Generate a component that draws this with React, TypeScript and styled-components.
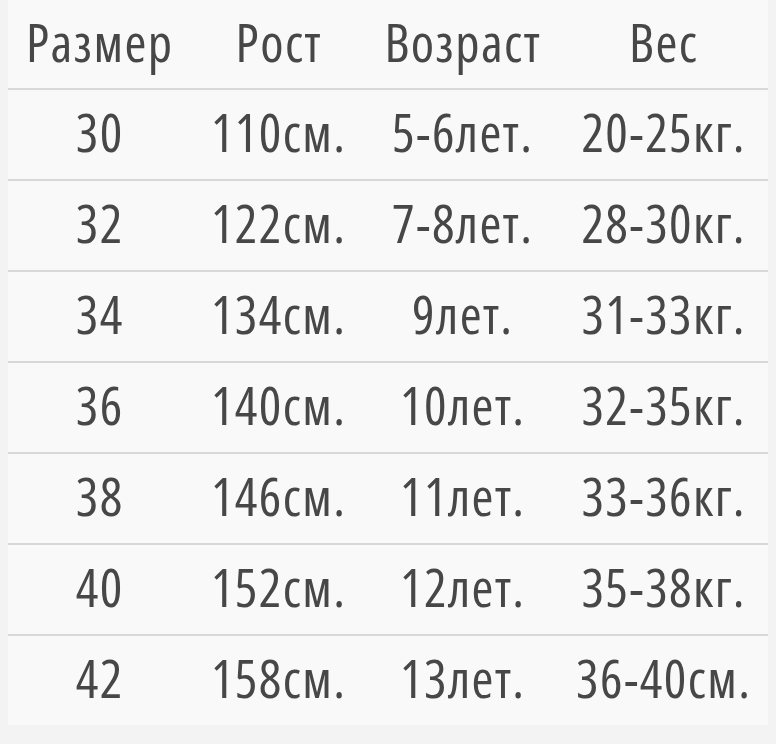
import React from "react";
import styled, { createGlobalStyle } from "styled-components";

const GlobalStyle = createGlobalStyle`
  html, body {
    margin: 0;
    padding: 0;
    background: #f3f3f3;
  }
`;

const Table = styled.div`
  width: 760px;
  margin-left: 8px;
  background: #f9f9f9;
  font-family: "Open Sans", sans-serif;
  font-stretch: 75%;
  color: #474747;
`;

const Row = styled.div<{ $head?: boolean }>`
  display: grid;
  grid-template-columns: 182px 176px 192px 210px;
  align-items: center;
  box-sizing: border-box;
  height: ${(p) => (p.$head ? "88px" : "91px")};
  border-top: ${(p) => (p.$head ? "none" : "2px solid #d8d8d8")};
`;

const Cell = styled.div`
  text-align: center;
  font-size: 53px;
  line-height: 1;
  letter-spacing: 1.4px;
  padding: 0 0 6px 1.4px;
  white-space: nowrap;
`;

const headers = ["Размер", "Рост", "Возраст", "Вес"];

const rows = [
  ["30", "110см.", "5-6лет.", "20-25кг."],
  ["32", "122см.", "7-8лет.", "28-30кг."],
  ["34", "134см.", "9лет.", "31-33кг."],
  ["36", "140см.", "10лет.", "32-35кг."],
  ["38", "146см.", "11лет.", "33-36кг."],
  ["40", "152см.", "12лет.", "35-38кг."],
  ["42", "158см.", "13лет.", "36-40см."],
];

export default function App() {
  return (
    <>
      <GlobalStyle />
      <Table>
        <Row $head>
          {headers.map((h) => (
            <Cell key={h}>{h}</Cell>
          ))}
        </Row>
        {rows.map((r) => (
          <Row key={r[0]}>
            {r.map((c, i) => (
              <Cell key={i}>{c}</Cell>
            ))}
          </Row>
        ))}
      </Table>
    </>
  );
}
